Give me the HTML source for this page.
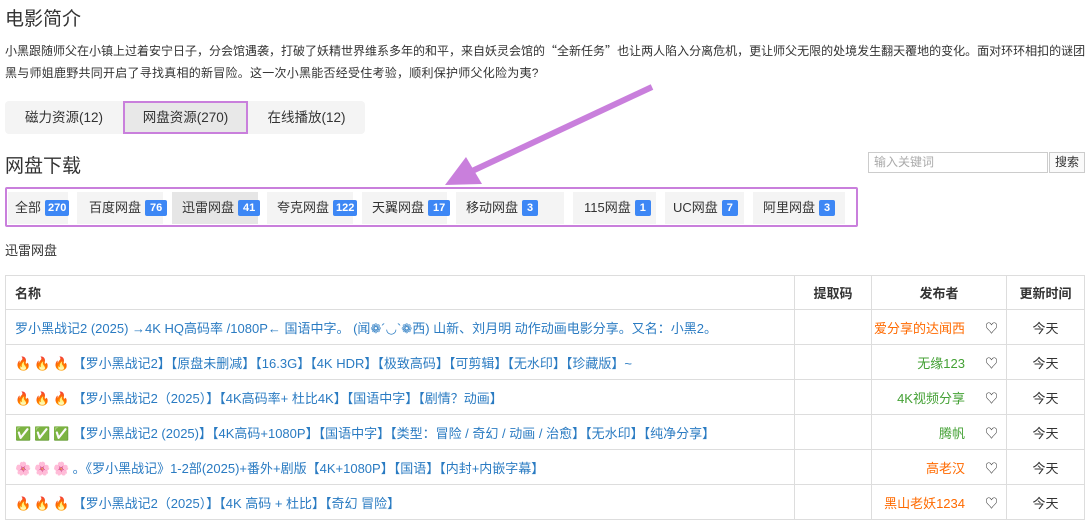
<!DOCTYPE html>
<html><head><meta charset="utf-8"><style>
*{box-sizing:border-box;margin:0;padding:0}
body{width:1088px;height:519px;overflow:hidden;background:#fff;font-family:"Liberation Sans","Noto Sans CJK SC",sans-serif;color:#333;font-size:13px;position:relative}
.a{position:absolute;white-space:nowrap}
.tabs{left:5px;top:101px;width:360px;height:33px;background:#f4f4f4;border-radius:4px}
.tab{position:absolute;top:0;height:33px;line-height:33px;text-align:center;font-size:13.5px}
.fb{left:5px;top:187px;width:853px;height:40px;border:2px solid #c97fdc;border-radius:2px}
.fi{position:absolute;top:3px;height:32px;line-height:32px;background:#f4f4f4;font-size:13px;padding-left:7px}
.fi b{display:inline-block;background:#3d87f5;color:#fff;font-size:11px;font-weight:bold;padding:0 5px;line-height:16px;border-radius:2px;margin-left:4px;vertical-align:1px}
table{position:absolute;left:5px;top:275px;width:1080px;border-collapse:collapse}
td,th{border:1px solid #ddd;height:35px;font-size:13px}
th{height:34px;font-weight:bold;text-align:center}
td.n{padding-left:9px;color:#2a7bc2;white-space:nowrap;overflow:hidden}
td.n i{font-style:normal;font-size:13px;margin-right:3px}
td.p{text-align:right;padding-right:8px}
td.p span{margin-right:20px}
td.t{text-align:center}
.o{color:#ff6a00}.g{color:#44a135}
</style></head><body>
<div class="a" style="left:5px;top:4px;font-size:19px;color:#333">电影简介</div>
<div class="a" style="left:5px;top:40px;width:1080px;line-height:22px;font-size:12px;text-align:justify;text-align-last:justify;overflow:hidden;height:22px">小黑跟随师父在小镇上过着安宁日子，分会馆遇袭，打破了妖精世界维系多年的和平，来自妖灵会馆的<span style="font-family:'Noto Sans CJK SC'">“</span>全新任务<span style="font-family:'Noto Sans CJK SC'">”</span>也让两人陷入分离危机，更让师父无限的处境发生翻天覆地的变化。面对环环相扣的谜团，小</div>
<div class="a" style="left:5px;top:62px;line-height:22px;font-size:12px;letter-spacing:0.25px">黑与师姐鹿野共同开启了寻找真相的新冒险。这一次小黑能否经受住考验，顺利保护师父化险为夷?</div>
<div class="a tabs">
<div class="tab" style="left:0;width:118px">磁力资源(12)</div>
<div class="tab" style="left:118px;width:125px;background:#e8e8e8;border:2px solid #c97fdc;line-height:29px">网盘资源(270)</div>
<div class="tab" style="left:243px;width:117px">在线播放(12)</div>
</div>
<div class="a" style="left:5px;top:151px;font-size:19px">网盘下载</div>
<div class="a" style="left:868px;top:152px;width:180px;height:21px;border:1px solid #ccc;font-size:12px;color:#aaa;line-height:19px;padding-left:5px">输入关键词</div>
<div class="a" style="left:1049px;top:152px;width:36px;height:21px;border:1px solid #ccc;font-size:12px;line-height:19px;text-align:center;background:#fafafa">搜索</div>
<svg class="a" style="left:0;top:0" width="1088" height="260"><line x1="652" y1="87" x2="470" y2="172" stroke="#c97fdc" stroke-width="6"/><polygon points="445,185 466,157 482,184" fill="#c97fdc"/></svg>
<div class="a fb">
<div class="fi" style="left:1px;width:60px">全部<b style="padding:0 3px">270</b></div>
<div class="fi" style="left:70px;width:86px;padding-left:12px">百度网盘<b>76</b></div>
<div class="fi" style="left:165px;width:86px;padding-left:10px;background:#e6e6e6">迅雷网盘<b>41</b></div>
<div class="fi" style="left:260px;width:86px;padding-left:10px">夸克网盘<b style="padding:0 3px">122</b></div>
<div class="fi" style="left:355px;width:85px;padding-left:10px">天翼网盘<b>17</b></div>
<div class="fi" style="left:449px;width:108px;padding-left:10px">移动网盘<b>3</b></div>
<div class="fi" style="left:566px;width:83px;padding-left:11px">115网盘<b>1</b></div>
<div class="fi" style="left:658px;width:79px;padding-left:8px">UC网盘<b>7</b></div>
<div class="fi" style="left:746px;width:92px;padding-left:10px">阿里网盘<b>3</b></div>
</div>
<div class="a" style="left:5px;top:240px">迅雷网盘</div>
<table>
<tr><th style="text-align:left;padding-left:9px;width:789px">名称</th><th style="width:77px">提取码</th><th style="width:135px">发布者</th><th>更新时间</th></tr>
<tr><td class="n">罗小黑战记2 (2025) →4K HQ高码率 /1080P← 国语中字。 (闻❁´◡`❁西) 山新、刘月明 动作动画电影分享。又名：小黑2。</td><td></td><td class="p"><span class="o">爱分享的达闻西</span>♡</td><td class="t">今天</td></tr>
<tr><td class="n"><i>🔥</i><i>🔥</i><i>🔥</i>【罗小黑战记2】【原盘未删减】【16.3G】【4K HDR】【极致高码】【可剪辑】【无水印】【珍藏版】~</td><td></td><td class="p"><span class="g">无缘123</span>♡</td><td class="t">今天</td></tr>
<tr><td class="n"><i>🔥</i><i>🔥</i><i>🔥</i>【罗小黑战记2（2025）】【4K高码率+ 杜比4K】【国语中字】【剧情？动画】</td><td></td><td class="p"><span class="g">4K视频分享</span>♡</td><td class="t">今天</td></tr>
<tr><td class="n"><i>✅</i><i>✅</i><i>✅</i>【罗小黑战记2 (2025)】【4K高码+1080P】【国语中字】【类型：冒险 / 奇幻 / 动画 / 治愈】【无水印】【纯净分享】</td><td></td><td class="p"><span class="g">腾帆</span>♡</td><td class="t">今天</td></tr>
<tr><td class="n"><i>🌸</i><i>🌸</i><i>🌸</i>。《罗小黑战记》1-2部(2025)+番外+剧版【4K+1080P】【国语】【内封+内嵌字幕】</td><td></td><td class="p"><span class="o">高老汉</span>♡</td><td class="t">今天</td></tr>
<tr><td class="n"><i>🔥</i><i>🔥</i><i>🔥</i>【罗小黑战记2（2025）】【4K 高码 + 杜比】【奇幻 冒险】</td><td></td><td class="p"><span class="o">黑山老妖1234</span>♡</td><td class="t">今天</td></tr>
</table>
</body></html>
